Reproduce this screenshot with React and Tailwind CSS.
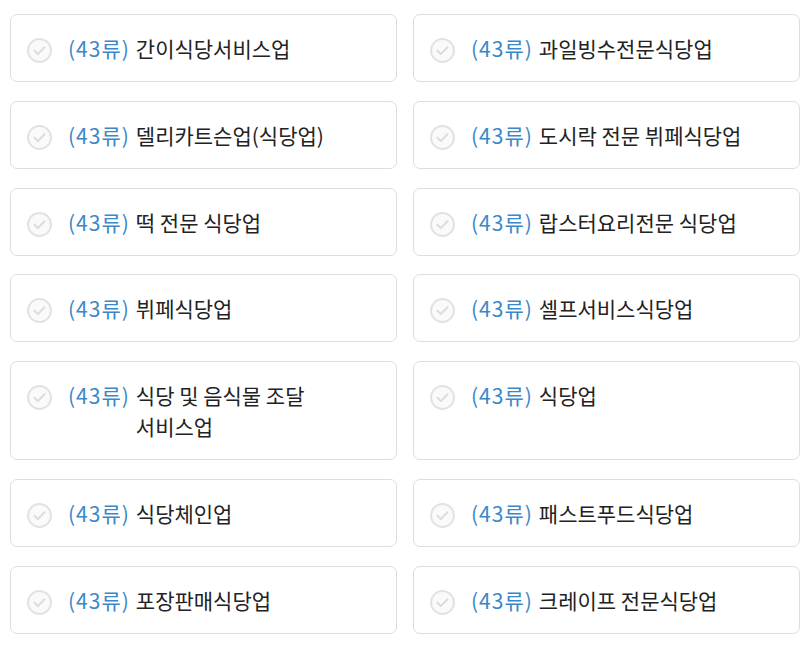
import React from "react";

const items = [
  "간이식당서비스업",
  "과일빙수전문식당업",
  "델리카트슨업(식당업)",
  "도시락 전문 뷔페식당업",
  "떡 전문 식당업",
  "랍스터요리전문 식당업",
  "뷔페식당업",
  "셀프서비스식당업",
  "식당 및 음식물 조달 서비스업",
  "식당업",
  "식당체인업",
  "패스트푸드식당업",
  "포장판매식당업",
  "크레이프 전문식당업",
];

function CheckIcon() {
  return (
    <svg width="25" height="25" viewBox="0 0 25 25" className="shrink-0">
      <circle cx="12.5" cy="12.5" r="11.5" fill="#fafafa" stroke="#e2e2e2" strokeWidth="2" />
      <path d="M7.5 12.8l3.4 3.3 6.6-6.8" fill="none" stroke="#dcdcdc" strokeWidth="2" strokeLinecap="round" strokeLinejoin="round" />
    </svg>
  );
}

export default function App() {
  return (
    <div
      className="bg-white min-h-[650px] pt-[14px] pl-[10px]"
      style={{ fontFamily: '"Noto Sans CJK KR", "Noto Sans", sans-serif' }}
    >
      <ul className="grid grid-cols-[387px_387px] gap-x-4 gap-y-[18.75px]">
        {items.map((name) => (
          <li
            key={name}
            className="flex items-start border border-[#dedede] rounded-[7px] pl-4 pr-4 pt-[18px] pb-[17px] min-h-[68px]"
          >
            <div className="mt-[5px]">
              <CheckIcon />
            </div>
            <span className="ml-4 mr-[6px] text-[21px] leading-[31px] text-[#3a87c9] tracking-[1px] whitespace-nowrap">
              (43류)
            </span>
            <span className="text-[21px] leading-[31px] text-[#222] max-w-[228px] break-keep">
              {name}
            </span>
          </li>
        ))}
      </ul>
    </div>
  );
}
